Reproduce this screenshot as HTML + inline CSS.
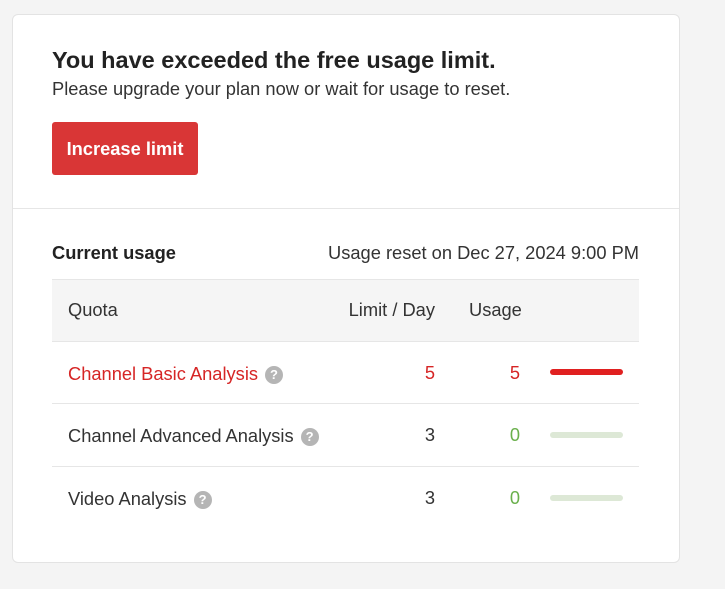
<!DOCTYPE html>
<html><head><style>
body{margin:0;background:#f4f4f4;font-family:"Liberation Sans","DejaVu Sans",sans-serif;color:#222;width:725px;height:589px;overflow:hidden;position:relative}
.card{position:absolute;left:12px;top:14px;width:666px;height:547px;background:#fff;border:1px solid #e3e3e3;border-radius:6px}
.a{position:absolute;white-space:nowrap}
.q{display:inline-block;width:18px;height:18px;border-radius:50%;background:#b5b5b5;color:#fff;font-size:13px;font-weight:bold;text-align:center;line-height:18px;vertical-align:1px;margin-left:7px}
.bar{position:absolute;left:550px;width:73px;height:6px;border-radius:3px}
.line{position:absolute;left:52px;width:587px;height:1px;background:#e6e6e6}
.t{font-size:18.3px}
</style></head><body>
<div class="card"></div>
<div class="a" style="left:52px;top:47px;font-size:23.5px;font-weight:bold;color:#222">You have exceeded the free usage limit.</div>
<div class="a" style="left:52px;top:78px;font-size:18.3px;color:#333">Please upgrade your plan now or wait for usage to reset.</div>
<div class="a" style="left:52px;top:122px;width:146px;height:53px;background:#d93636;border-radius:3px;color:#fff;font-weight:bold;font-size:18.3px;line-height:53px;text-align:center">Increase limit</div>
<div class="a" style="left:13px;top:208px;width:666px;height:1px;background:#e6e6e6"></div>
<div class="a t" style="left:52px;top:242px;font-weight:bold">Current usage</div>
<div class="a t" style="left:300px;top:242px;width:339px;text-align:right;color:#333">Usage reset on Dec 27, 2024 9:00 PM</div>
<div class="a" style="left:52px;top:279px;width:587px;height:62px;background:#f5f5f5;border-top:1px solid #e6e6e6;box-sizing:border-box"></div>
<div class="a t" style="left:68px;top:299px;color:#333">Quota</div>
<div class="a t" style="left:300px;width:135px;text-align:right;top:299px;color:#333">Limit / Day</div>
<div class="a t" style="left:469px;top:299px;color:#333">Usage</div>
<div class="line" style="top:341px"></div>
<div class="a t" style="left:68px;top:363px;color:#d62525">Channel Basic Analysis<span class="q">?</span></div>
<div class="a t" style="left:400px;width:35px;text-align:right;top:362px;color:#d62525">5</div>
<div class="a t" style="left:485px;width:35px;text-align:right;top:362px;color:#d62525">5</div>
<div class="bar" style="top:369px;background:#e02020"></div>
<div class="line" style="top:403px"></div>
<div class="a t" style="left:68px;top:425px;color:#333">Channel Advanced Analysis<span class="q">?</span></div>
<div class="a t" style="left:400px;width:35px;text-align:right;top:424px;color:#333">3</div>
<div class="a t" style="left:485px;width:35px;text-align:right;top:424px;color:#6ab04c">0</div>
<div class="bar" style="top:432px;background:#dde8d6"></div>
<div class="line" style="top:466px"></div>
<div class="a t" style="left:68px;top:488px;color:#333">Video Analysis<span class="q">?</span></div>
<div class="a t" style="left:400px;width:35px;text-align:right;top:487px;color:#333">3</div>
<div class="a t" style="left:485px;width:35px;text-align:right;top:487px;color:#6ab04c">0</div>
<div class="bar" style="top:495px;background:#dde8d6"></div>
</body></html>
